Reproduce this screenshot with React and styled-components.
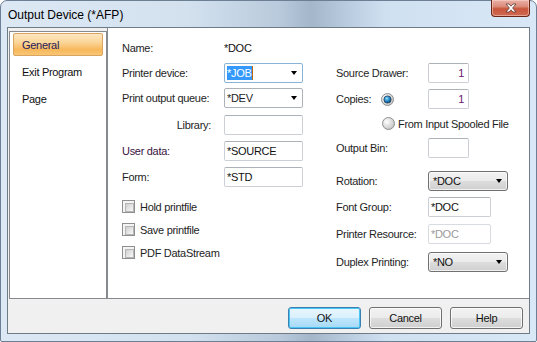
import React from 'react'
import styled, { createGlobalStyle, css } from 'styled-components'

const Global = createGlobalStyle`
  html, body {
    margin: 0;
    padding: 0;
    background: #ffffff;
  }
  body {
    font-family: "Liberation Sans", Arial, sans-serif;
    font-size: 11px;
    letter-spacing: -0.3px;
    color: #1e1e1e;
  }
`

const Window = styled.div`
  width: 537px;
  height: 342px;
  box-sizing: border-box;
  display: flex;
  flex-direction: column;
  border: 1px solid #6c7f94;
  border-radius: 7px 7px 2px 2px;
  padding: 0 6px 7px 6px;
  background: linear-gradient(
    90deg,
    #dce8f4 0%,
    #d3e1ef 35%,
    #b9cadc 52%,
    #a3b6ca 58%,
    #b4c7da 63%,
    #cfe0f1 72%,
    #d9e8f6 100%
  );
`

const TitleBar = styled.div`
  height: 26px;
  display: flex;
  justify-content: space-between;
  align-items: center;
  padding-left: 1px;
`

const Title = styled.span`
  font-size: 12px;
  letter-spacing: 0;
  color: #000;
  margin-top: 1px;
`

const CloseButton = styled.div`
  align-self: flex-start;
  width: 39px;
  height: 17px;
  margin-top: -1px;
  box-sizing: border-box;
  border: 1px solid #6b2418;
  border-top: none;
  border-radius: 0 0 4px 4px;
  display: flex;
  align-items: center;
  justify-content: center;
  background: linear-gradient(180deg, #e9b1a6 0%, #dc8d7d 40%, #c8563c 55%, #d06a52 100%);
  box-shadow: inset 0 0 0 1px rgba(255, 220, 210, 0.5);
`

const Client = styled.div`
  flex: 1;
  display: flex;
  flex-direction: column;
  border: 1px solid #6e7a86;
  background: #f0f0f0;
`

const Body = styled.div`
  height: 271px;
  display: flex;
`

const ListPanel = styled.div`
  width: 98px;
  height: 268px;
  box-sizing: border-box;
  margin: 3px 0 0 1px;
  padding: 1px 0 0 3px;
  border: 1px solid #868a8f;
  background: #fff;
`

const ListItem = styled.div`
  width: 90px;
  height: 23px;
  box-sizing: border-box;
  margin-bottom: 4px;
  padding-left: 9px;
  display: flex;
  align-items: center;
  color: #111;
  ${(p) =>
    p.active &&
    css`
      color: #24205c;
      border: 1px solid #d9a55e;
      border-radius: 2px;
      padding-left: 8px;
      background: linear-gradient(180deg, #fde7c1 0%, #fbd598 40%, #f7b85a 75%, #f8c677 100%);
    `}
`

const FormPanel = styled.div`
  flex: 1;
  display: flex;
  background: #fff;
  border-left: 1px solid #868a8f;
  border-bottom: 1px solid #868a8f;
  padding: 10px 0 0 14px;
`

const Column = styled.div`
  display: flex;
  flex-direction: column;
  width: ${(p) => p.w}px;
  margin-left: ${(p) => p.ml || 0}px;
  padding-top: ${(p) => p.pt || 0}px;
`

const Row = styled.div`
  display: flex;
  align-items: center;
  height: ${(p) => p.h || 20}px;
  margin-top: ${(p) => p.mt || 0}px;
  padding-left: ${(p) => p.pl || 0}px;
`

const Label = styled.span`
  width: ${(p) => p.w}px;
  flex-shrink: 0;
  text-align: ${(p) => p.align || 'left'};
  padding-right: ${(p) => p.pr || 0}px;
  box-sizing: border-box;
  color: ${(p) => p.color || '#1e1e1e'};
`

const Value = styled.span`
  color: #111;
`

const TextBox = styled.div`
  width: ${(p) => p.w}px;
  height: 20px;
  box-sizing: border-box;
  border: 1px solid #ccd0d6;
  border-top-color: #adb2b9;
  border-radius: 2px;
  background: #fff;
  display: flex;
  align-items: center;
  justify-content: ${(p) => (p.right ? 'flex-end' : 'flex-start')};
  padding: 0 4px 0 2px;
  color: ${(p) => (p.disabled ? '#9a9a9a' : p.right ? '#6a1470' : '#111')};
  ${(p) =>
    p.disabled &&
    css`
      border-color: #d8dbe0;
    `}
`

const Combo = styled.div`
  width: 80px;
  height: 20px;
  box-sizing: border-box;
  border: 1px solid ${(p) => (p.focus ? '#8ab3d8' : '#adb2b9')};
  border-radius: 2px;
  background: #fff;
  display: flex;
  align-items: center;
  justify-content: space-between;
  padding: 0 5px 0 2px;
`

const DropButton = styled.div`
  width: 80px;
  height: 20px;
  box-sizing: border-box;
  border: 1px solid #707070;
  border-radius: 3px;
  display: flex;
  align-items: center;
  justify-content: space-between;
  padding: 0 5px 0 4px;
  color: #111;
  background: linear-gradient(180deg, #f2f2f2 0%, #ebebeb 50%, #dddddd 51%, #cfcfcf 100%);
  box-shadow: inset 0 0 0 1px rgba(255, 255, 255, 0.7);
`

const Selected = styled.span`
  display: inline-flex;
  align-items: center;
  height: 14px;
  padding-right: 1px;
  background: #3399ff;
  color: #fff;
  border-right: 1px solid #c06a10;
`

const Arrow = styled.span`
  width: 0;
  height: 0;
  border-left: 3.5px solid transparent;
  border-right: 3.5px solid transparent;
  border-top: 4px solid #000;
`

const CheckRow = styled.label`
  display: flex;
  align-items: center;
  height: 13px;
  margin-top: ${(p) => p.mt}px;
  gap: 5px;
`

const CheckBox = styled.span`
  width: 13px;
  height: 13px;
  box-sizing: border-box;
  border: 1px solid #8e8f8f;
  padding: 2px;
  background: #f4f4f4;
  &::after {
    content: '';
    display: block;
    width: 7px;
    height: 7px;
    border: 1px solid #b5b5b5;
    background: linear-gradient(135deg, #cfcfcf 0%, #e8e8e8 60%, #f8f8f8 100%);
  }
`

const Radio = ({ checked }) => (
  <svg width="13" height="13" viewBox="0 0 13 13" style={{ flexShrink: 0 }}>
    <defs>
      <radialGradient id="rg-off" cx="0.35" cy="0.35" r="0.7">
        <stop offset="0" stopColor="#ffffff" />
        <stop offset="1" stopColor="#c3c3c3" />
      </radialGradient>
      <radialGradient id="rg-dot" cx="0.4" cy="0.35" r="0.7">
        <stop offset="0" stopColor="#8fe0ff" />
        <stop offset="0.5" stopColor="#2a8fd0" />
        <stop offset="1" stopColor="#0d3f66" />
      </radialGradient>
    </defs>
    <circle cx="6.5" cy="6.5" r="6" fill="url(#rg-off)" stroke="#8e8f8f" />
    {checked && <circle cx="6.5" cy="6.5" r="3.6" fill="url(#rg-dot)" stroke="#1c3c57" strokeWidth="0.8" />}
  </svg>
)

const RadioRow = styled.div`
  display: flex;
  align-items: center;
  height: 13px;
  margin-top: ${(p) => p.mt}px;
  padding-left: 46px;
  gap: 3px;
`

const ButtonBar = styled.div`
  flex: 1;
  display: flex;
  justify-content: flex-end;
  align-items: flex-start;
  gap: 8px;
  padding: 8px 6px 0 0;
`

const Button = styled.div`
  width: 73px;
  height: 22px;
  box-sizing: border-box;
  border: 1px solid #707070;
  border-radius: 3px;
  display: flex;
  align-items: center;
  justify-content: center;
  color: #111;
  background: linear-gradient(180deg, #f2f2f2 0%, #ebebeb 50%, #dddddd 51%, #cfcfcf 100%);
  box-shadow: inset 0 0 0 1px rgba(255, 255, 255, 0.75);
  ${(p) =>
    p.primary &&
    css`
      border-color: #3c7fb1;
      background: linear-gradient(180deg, #eaf6fd 0%, #d9f0fc 50%, #bee6fd 51%, #a7d9f5 100%);
      box-shadow: inset 0 0 0 1px #48c4f5;
    `}
`

export default function App() {
  return (
    <>
      <Global />
      <Window>
        <TitleBar>
          <Title>Output Device (*AFP)</Title>
          <CloseButton>
            <svg width="12" height="10" viewBox="0 0 12 10">
              <path
                d="M1 1 L4 1 L6 3.2 L8 1 L11 1 L7.6 5 L11 9 L8 9 L6 6.8 L4 9 L1 9 L4.4 5 Z"
                fill="#ffffff"
                stroke="#5a3a35"
                strokeWidth="0.8"
                strokeLinejoin="round"
              />
            </svg>
          </CloseButton>
        </TitleBar>
        <Client>
          <Body>
            <ListPanel>
              <ListItem active>General</ListItem>
              <ListItem>Exit Program</ListItem>
              <ListItem>Page</ListItem>
            </ListPanel>
            <FormPanel>
              <Column w={181}>
                <Row>
                  <Label w={102}>Name:</Label>
                  <Value>*DOC</Value>
                </Row>
                <Row mt={5}>
                  <Label w={102}>Printer device:</Label>
                  <Combo focus>
                    <Selected>*JOB</Selected>
                    <Arrow />
                  </Combo>
                </Row>
                <Row mt={5}>
                  <Label w={102}>Print output queue:</Label>
                  <Combo>
                    <span>*DEV</span>
                    <Arrow />
                  </Combo>
                </Row>
                <Row mt={7}>
                  <Label w={102} align="right" pr={13}>
                    Library:
                  </Label>
                  <TextBox w={80} />
                </Row>
                <Row mt={6}>
                  <Label w={102} color="#3a1240">
                    User data:
                  </Label>
                  <TextBox w={80}>*SOURCE</TextBox>
                </Row>
                <Row mt={6}>
                  <Label w={102}>Form:</Label>
                  <TextBox w={80}>*STD</TextBox>
                </Row>
                <CheckRow mt={13}>
                  <CheckBox />
                  Hold printfile
                </CheckRow>
                <CheckRow mt={10}>
                  <CheckBox />
                  Save printfile
                </CheckRow>
                <CheckRow mt={10}>
                  <CheckBox />
                  PDF DataStream
                </CheckRow>
              </Column>
              <Column w={180} ml={33} pt={25}>
                <Row>
                  <Label w={92}>Source Drawer:</Label>
                  <TextBox w={41} right>
                    1
                  </TextBox>
                </Row>
                <Row mt={6}>
                  <Label w={45}>Copies:</Label>
                  <Radio checked />
                  <TextBox w={41} right style={{ marginLeft: 34 }}>
                    1
                  </TextBox>
                </Row>
                <RadioRow mt={8}>
                  <Radio />
                  From Input Spooled File
                </RadioRow>
                <Row mt={8}>
                  <Label w={92}>Output Bin:</Label>
                  <TextBox w={41} />
                </Row>
                <Row mt={13}>
                  <Label w={92}>Rotation:</Label>
                  <DropButton>
                    <span>*DOC</span>
                    <Arrow />
                  </DropButton>
                </Row>
                <Row mt={6}>
                  <Label w={92}>Font Group:</Label>
                  <TextBox w={63}>*DOC</TextBox>
                </Row>
                <Row mt={7}>
                  <Label w={92}>Printer Resource:</Label>
                  <TextBox w={63} disabled>
                    *DOC
                  </TextBox>
                </Row>
                <Row mt={8}>
                  <Label w={92}>Duplex Printing:</Label>
                  <DropButton>
                    <span>*NO</span>
                    <Arrow />
                  </DropButton>
                </Row>
              </Column>
            </FormPanel>
          </Body>
          <ButtonBar>
            <Button primary>OK</Button>
            <Button>Cancel</Button>
            <Button>Help</Button>
          </ButtonBar>
        </Client>
      </Window>
    </>
  )
}
